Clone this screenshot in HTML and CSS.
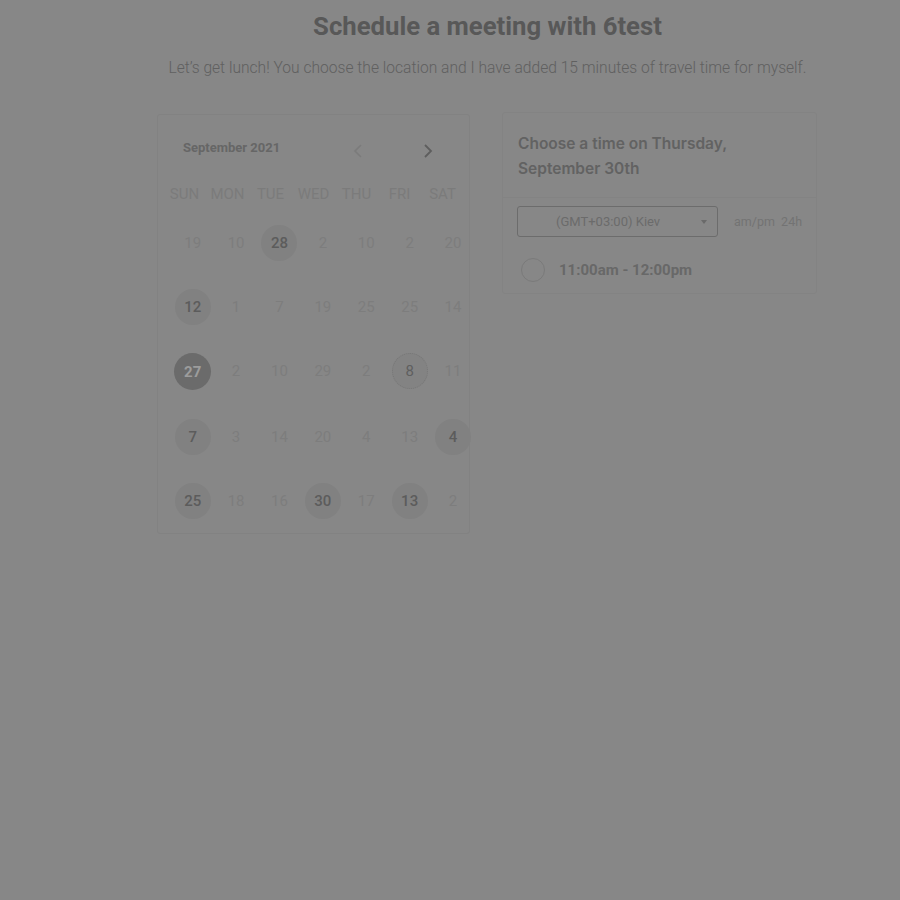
FILE: index.html
```html
<!DOCTYPE html>
<html>
<head>
<meta charset="utf-8">
<link rel="stylesheet" href="styles.css">
</head>
<body>
<div class="page">
  <h1 class="title">Schedule a meeting with 6test</h1>
  <p class="subtitle">Let’s get lunch! You choose the location and I have added 15 minutes of travel time for myself.</p>
  <div class="panels">
    <div class="calendar">
      <div class="cal-head">
        <span class="month">September 2021</span>
        <span class="nav prev"><svg width="10" height="16" viewBox="0 0 10 16"><path d="M8 2 L2 8 L8 14" fill="none" stroke="currentColor" stroke-width="1.6"/></svg></span>
        <span class="nav next"><svg width="10" height="16" viewBox="0 0 10 16"><path d="M2 2 L8 8 L2 14" fill="none" stroke="currentColor" stroke-width="1.8"/></svg></span>
      </div>
      <div class="grid weekdays">
        <span>SUN</span><span>MON</span><span>TUE</span><span>WED</span><span>THU</span><span>FRI</span><span>SAT</span>
      </div>
      <div class="grid days">
        <span class="d">19</span><span class="d">10</span><span class="d av">28</span><span class="d">2</span><span class="d">10</span><span class="d">2</span><span class="d">20</span>
        <span class="d av">12</span><span class="d">1</span><span class="d">7</span><span class="d">19</span><span class="d">25</span><span class="d">25</span><span class="d">14</span>
        <span class="d sel">27</span><span class="d">2</span><span class="d">10</span><span class="d">29</span><span class="d">2</span><span class="d odd">8</span><span class="d">11</span>
        <span class="d av">7</span><span class="d">3</span><span class="d">14</span><span class="d">20</span><span class="d">4</span><span class="d">13</span><span class="d av">4</span>
        <span class="d av">25</span><span class="d">18</span><span class="d">16</span><span class="d av">30</span><span class="d">17</span><span class="d av">13</span><span class="d">2</span>
      </div>
    </div>
    <div class="times">
      <div class="times-head">Choose a time on Thursday, September 30th</div>
      <div class="tz-row">
        <div class="select"><span class="tz">(GMT+03:00) Kiev</span><span class="caret"></span></div>
        <span class="fmt">am/pm&nbsp; 24h</span>
      </div>
      <div class="slot"><span class="radio"></span><span class="slot-text">11:00am - 12:00pm</span></div>
    </div>
  </div>
</div>
</body>
</html>
```
FILE: styles.css
```css
html, body {
  margin: 0;
  padding: 0;
  background: #878787;
  font-family: Roboto, "Liberation Sans", sans-serif;
}
.page {
  width: 661px;
  margin-left: 157px;
}
.title {
  margin: 0;
  padding-top: 11px;
  text-align: center;
  font-size: 25.7px;
  line-height: 30px;
  font-weight: 700;
  color: #585858;
}
.subtitle {
  margin: 0;
  padding-top: 16px;
  text-align: center;
  font-size: 15.6px;
  font-weight: 300;
  line-height: 22px;
  color: #606060;
  white-space: nowrap;
}
.panels {
  display: flex;
  gap: 32px;
  margin-top: 35px;
  align-items: flex-start;
}
.calendar {
  width: 313px;
  height: 420px;
  border: 1px solid #828282;
  border-radius: 3px;
  box-sizing: border-box;
}
.cal-head {
  display: flex;
  align-items: center;
  height: 30px;
  margin-top: 19px;
  padding-left: 25px;
}
.month {
  font-size: 13px;
  font-weight: 700;
  color: #666;
  width: 170px;
  position: relative;
  top: -2px;
}
.nav {
  display: flex;
  width: 10px;
  height: 16px;
  position: relative;
  top: 2px;
}
.prev { color: #7b7b7b; margin-right: 60px; }
.next { color: #5e5e5e; }
.grid {
  display: grid;
  grid-template-columns: repeat(7, 43px);
}
.weekdays {
  padding-left: 5px;
  margin-top: 20px;
  font-size: 15px;
  color: #7b7b7b;
  line-height: 20px;
}
.weekdays span {
  text-align: center;
}
.days {
  padding-left: 13px;
  margin-top: 21px;
  grid-template-columns: repeat(7, 43.4px);
  row-gap: 28.2px;
  justify-items: center;
}
.d {
  width: 36px;
  height: 36px;
  border-radius: 50%;
  display: flex;
  align-items: center;
  justify-content: center;
  font-size: 15px;
  color: #7d7d7d;
}
.d.av {
  background: #818181;
  color: #5c5c5c;
  font-weight: 500;
}
.d.sel {
  width: 37px;
  height: 37px;
  background: #6b6b6b;
  color: #9c9c9c;
  font-weight: 700;
}
.d.odd {
  border: 1px dotted #777;
  box-sizing: border-box;
  background: #838383;
  color: #5f5f5f;
}
.times {
  width: 315px;
  border: 1px solid #838383;
  border-radius: 3px;
  padding-bottom: 11px;
  margin-top: -2px;
  box-sizing: border-box;
}
.times-head {
  font-family: Inter, Roboto, sans-serif;
  font-weight: 600;
  font-size: 15.5px;
  line-height: 25px;
  color: #626262;
  padding: 18px 60px 16px 15px;
  border-bottom: 1px solid #838383;
}
.tz-row {
  display: flex;
  align-items: center;
  padding: 8px 0 0 14px;
}
.select {
  width: 201px;
  height: 31px;
  box-sizing: border-box;
  border: 1px solid #6c6c6c;
  border-radius: 3px;
  display: flex;
  align-items: center;
  position: relative;
}
.tz {
  font-size: 13px;
  color: #6b6b6b;
  padding-left: 38px;
}
.caret {
  position: absolute;
  right: 10px;
  top: 13px;
  border-left: 3.5px solid transparent;
  border-right: 3.5px solid transparent;
  border-top: 4px solid #6a6a6a;
}
.fmt {
  font-size: 12.5px;
  color: #737373;
  margin-left: 16px;
}
.slot {
  display: flex;
  align-items: center;
  padding: 21px 0 0 18px;
}
.radio {
  width: 22px;
  height: 22px;
  border: 1px solid #7a7a7a;
  border-radius: 50%;
}
.slot-text {
  font-size: 15px;
  font-weight: 700;
  color: #686868;
  margin-left: 14px;
}
```
